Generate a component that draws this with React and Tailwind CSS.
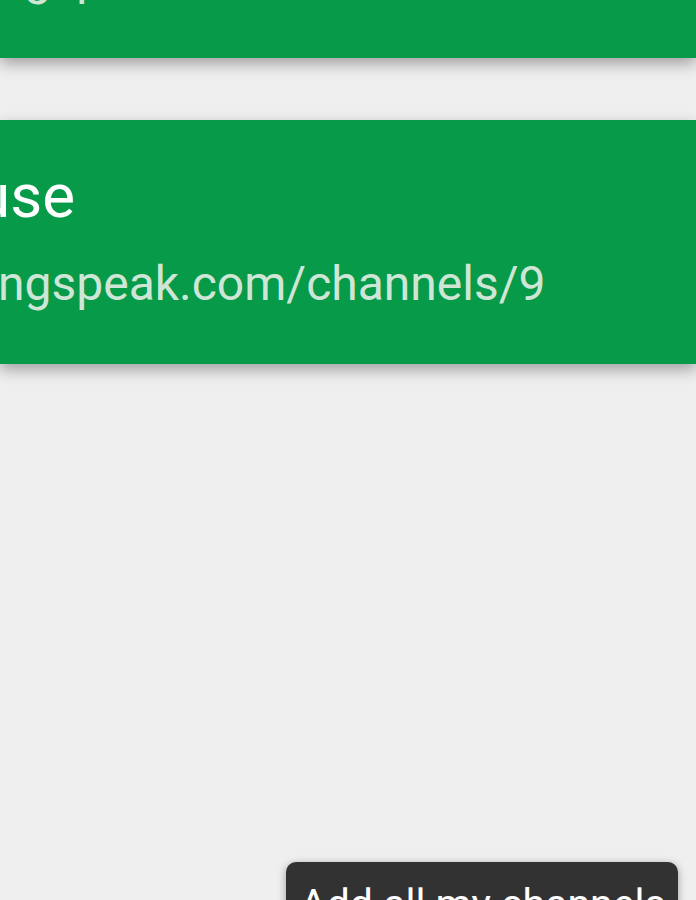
const cards = [
  {title: 'use', url: 'ngspeak.com/channels/12'},
  {title: 'use', url: 'ngspeak.com/channels/9'},
];

function ChannelCard({title, url, first}) {
  return (
    <div
      className={`${first ? '-mt-[186px]' : ''} bg-[#079a49] shadow-[0_6px_14px_rgba(0,0,0,0.32)] pt-[45px] pb-[56px] overflow-hidden`}
    >
      <div className="text-[62px] leading-none text-white -ml-[24px] whitespace-nowrap">{title}</div>
      <div className="mt-[33px] text-[48px] leading-none text-[#cfe6d7] -ml-[2px] whitespace-nowrap">
        {url}
      </div>
    </div>
  );
}

export default function App() {
  return (
    <div className="relative w-[696px] h-[900px] overflow-hidden bg-[#efefef] font-['Roboto',sans-serif]">
      <div className="flex flex-col gap-[62px]">
        {cards.map((c, i) => (
          <ChannelCard key={i} title={c.title} url={c.url} first={i === 0} />
        ))}
      </div>
      <div className="absolute left-[286px] top-[862px] w-[392px] h-[90px] rounded-[10px] bg-[#323232] shadow-[0_2px_8px_rgba(0,0,0,0.35)] pl-[14px] pt-[22px]">
        <span className="block text-[41px] leading-none text-white whitespace-nowrap">Add all my channels</span>
      </div>
    </div>
  );
}
